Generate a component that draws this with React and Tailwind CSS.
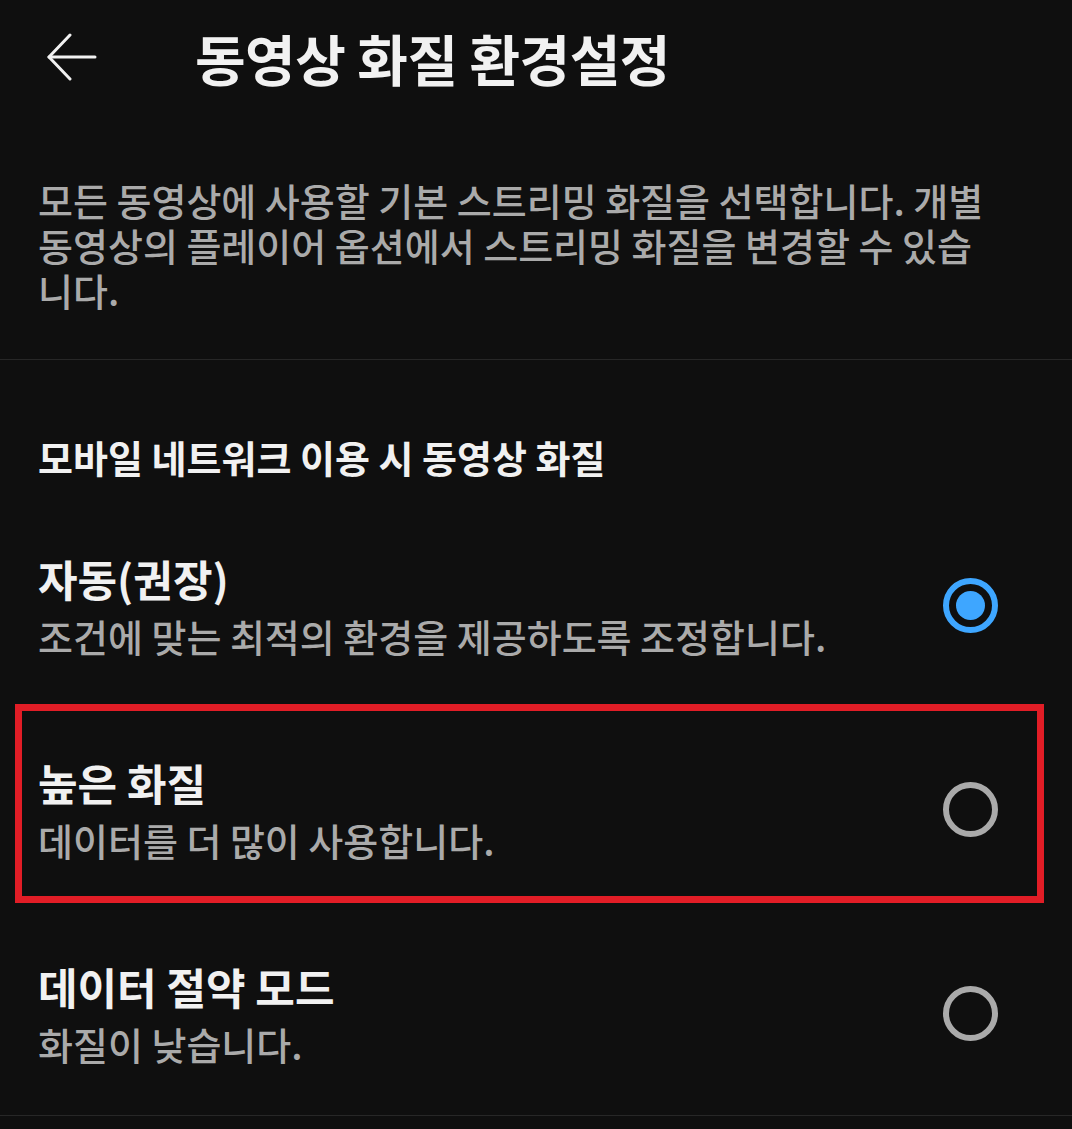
import React, { useState } from 'react';

const FONT = '"Noto Sans CJK KR", "Noto Sans", sans-serif';

const options = [
  { id: 'auto', title: '자동(권장)', desc: '조건에 맞는 최적의 환경을 제공하도록 조정합니다.' },
  { id: 'high', title: '높은 화질', desc: '데이터를 더 많이 사용합니다.', marked: true },
  { id: 'saver', title: '데이터 절약 모드', desc: '화질이 낮습니다.' },
];

function Radio({ checked }) {
  return (
    <div
      className={`w-[55px] h-[55px] rounded-full border-[6px] flex items-center justify-center shrink-0 ${
        checked ? 'border-[#3ea6ff]' : 'border-[#aaaaaa]'
      }`}
    >
      {checked && <div className="w-[29px] h-[29px] rounded-full bg-[#3ea6ff]" />}
    </div>
  );
}

function BackArrow() {
  return (
    <svg width="52" height="48" viewBox="0 0 52 48" fill="none" stroke="#f1f1f1" strokeWidth="3" strokeLinecap="round" strokeLinejoin="round">
      <path d="M49 24H3" />
      <path d="M24 2L3 24L24 46" />
    </svg>
  );
}

export default function App() {
  const [selected, setSelected] = useState('auto');

  return (
    <div className="w-[1072px] h-[1129px] bg-[#0f0f0f] text-[#f1f1f1] overflow-hidden" style={{ fontFamily: FONT }}>
      {/* header */}
      <div className="h-[114px] flex items-center">
        <button className="ml-[46px] w-[52px] flex items-center">
          <BackArrow />
        </button>
        <h1 className="ml-[97px] text-[55px] font-bold leading-none tracking-[-0.5px]">동영상 화질 환경설정</h1>
      </div>

      {/* description */}
      <div className="pt-[63px] pb-[47px] px-[38px] border-b border-[#272727]">
        <p className="text-[38px] leading-[45px] font-medium text-[#aaaaaa] whitespace-nowrap">
          모든 동영상에 사용할 기본 스트리밍 화질을 선택합니다. 개별
          <br />
          동영상의 플레이어 옵션에서 스트리밍 화질을 변경할 수 있습
          <br />
          니다.
        </p>
      </div>

      <div className="pt-[74px] px-[38px]">
        <h2 className="text-[38px] leading-[45px] font-bold">모바일 네트워크 이용 시 동영상 화질</h2>
      </div>

      <div className="mt-[24px] border-b border-[#272727]">
        {options.map((o) => (
          <div
            key={o.id}
            onClick={() => setSelected(o.id)}
            className="relative h-[204px] flex items-center justify-between pl-[38px] pr-[74px]"
          >
            <div className="flex flex-col">
              <span className="text-[43px] leading-[50px] font-bold">{o.title}</span>
              <span className="mt-[10px] text-[38px] leading-[45px] font-medium text-[#aaaaaa]">{o.desc}</span>
            </div>
            <Radio checked={selected === o.id} />
            {o.marked && (
              <div className="absolute left-[15px] right-[28px] top-[-3px] bottom-[8px] border-[7px] border-[#e11d26] pointer-events-none" />
            )}
          </div>
        ))}
      </div>
    </div>
  );
}
